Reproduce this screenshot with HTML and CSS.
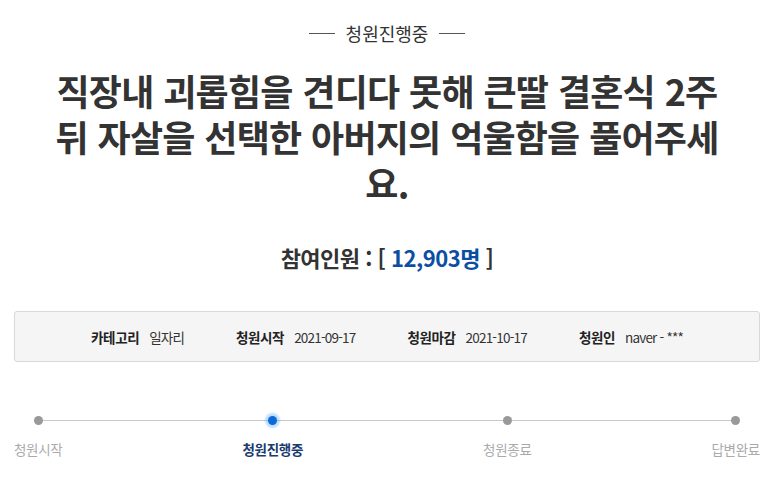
FILE: index.html
```html
<!DOCTYPE html>
<html lang="ko">
<head>
<meta charset="utf-8">
<title>청원진행중</title>
<link rel="stylesheet" href="styles.css">
</head>
<body>
<main class="petition">
  <div class="status"><span class="status-line"></span><span class="status-text">청원진행중</span><span class="status-line"></span></div>
  <h1 class="title">직장내 괴롭힘을 견디다 못해 큰딸 결혼식 2주<br>뒤 자살을 선택한 아버지의 억울함을 풀어주세<br>요.</h1>
  <p class="count">참여인원 : [ <span class="count-num">12,903명</span> ]</p>
  <ul class="info">
    <li class="info-item"><b class="info-label">카테고리</b><span class="info-value">일자리</span></li>
    <li class="info-item"><b class="info-label">청원시작</b><span class="info-value">2021-09-17</span></li>
    <li class="info-item"><b class="info-label">청원마감</b><span class="info-value">2021-10-17</span></li>
    <li class="info-item"><b class="info-label">청원인</b><span class="info-value">naver - ***</span></li>
  </ul>
  <ol class="steps">
    <li class="step"><span class="dot"></span><span class="step-label">청원시작</span></li>
    <li class="step step-active"><span class="dot"></span><span class="step-label">청원진행중</span></li>
    <li class="step"><span class="dot"></span><span class="step-label">청원종료</span></li>
    <li class="step"><span class="dot"></span><span class="step-label">답변완료</span></li>
  </ol>
</main>
</body>
</html>
```
FILE: styles.css
```css
* { box-sizing: border-box; }
html, body { margin: 0; padding: 0; background: #fff; }
body {
  font-family: "Noto Sans CJK KR", "Noto Sans", sans-serif;
  color: #333;
  width: 778px;
}
.petition {
  padding: 22px 18px 0 14px;
}
.status {
  display: flex;
  align-items: center;
  justify-content: center;
  gap: 11px;
  height: 22px;
}
.status-line {
  width: 26px;
  height: 1px;
  background: #555;
}
.status-text {
  font-size: 18px;
  color: #333;
}
.title {
  margin: 23px -14px 0;
  text-align: center;
  font-size: 36px;
  line-height: 46px;
  font-weight: 700;
  letter-spacing: -0.8px;
  word-spacing: 0.5px;
  white-space: nowrap;
  color: #333;
}
.count {
  margin: 38px 0 0;
  text-align: center;
  font-size: 22px;
  font-weight: 700;
  letter-spacing: -0.5px;
  line-height: 28px;
  color: #333;
}
.count-num { color: #0b4ea2; }
.info {
  list-style: none;
  margin: 40px 0 0;
  padding: 0;
  height: 51px;
  display: flex;
  align-items: center;
  justify-content: center;
  gap: 52px;
  background: #f5f5f5;
  border: 1px solid #d9d9d9;
  border-radius: 3px;
}
.info-item {
  display: flex;
  align-items: center;
  gap: 10px;
  font-size: 13.5px;
}
.info-label {
  font-weight: 700;
  color: #222;
  letter-spacing: -0.4px;
}
.info-value {
  color: #333;
  letter-spacing: -0.8px;
}
.steps {
  list-style: none;
  margin: 54px 0 0;
  padding: 0;
  display: flex;
  justify-content: space-between;
  position: relative;
}
.steps::before {
  content: "";
  position: absolute;
  left: 24px;
  right: 24px;
  top: 4px;
  height: 1px;
  background: #c8c8c8;
}
.step {
  display: flex;
  flex-direction: column;
  align-items: center;
  gap: 15px;
  position: relative;
}
.dot {
  width: 9px;
  height: 9px;
  border-radius: 50%;
  background: #999;
}
.step-active .dot {
  background: #0a6ad8;
  box-shadow: 0 0 2px 3px rgba(70, 160, 245, 0.35);
}
.step-label {
  font-size: 13.5px;
  color: #aaa;
  letter-spacing: -0.3px;
  line-height: 18px;
}
.step-active .step-label {
  color: #1a3b6e;
  font-weight: 700;
}
```
